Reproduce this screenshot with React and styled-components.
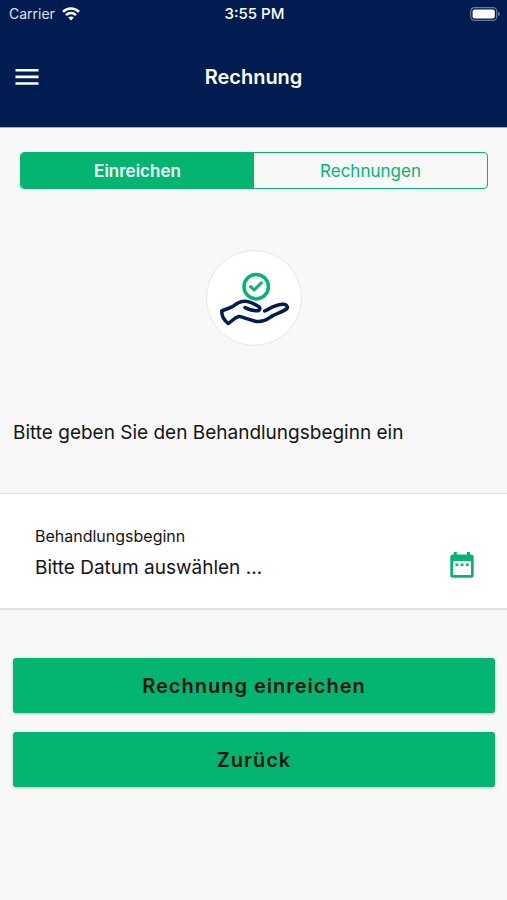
import React, { useState } from "react";
import styled, { createGlobalStyle } from "styled-components";

const green = "#04b572";
const navy = "#001c50";
const line = "#e2e2e3";

const GlobalStyle = createGlobalStyle`
  * { box-sizing: border-box; }
  body {
    margin: 0;
    background: #f8f8f8;
    color: #141414;
    font-family: Inter, "Liberation Sans", sans-serif;
  }
  button, input { font: inherit; color: inherit; }
`;

const Header = styled.header`
  background: ${navy};
  color: #fff;
  border-bottom: 1px solid #a3a9b8;
`;

const StatusBar = styled.div`
  display: grid;
  grid-template-columns: 1fr auto 1fr;
  align-items: center;
  height: 28px;
  padding: 0 7px 0 9px;
  font-size: 14px;
  line-height: 20px;
`;

const Carrier = styled.div`
  display: flex;
  align-items: center;
  gap: 7px;
  color: #dfe3ea;
`;

const Clock = styled.time`
  font-size: 15px;
  font-weight: 500;
`;

const BatteryIcon = styled.svg`
  justify-self: end;
`;

const NavBar = styled.div`
  display: grid;
  grid-template-columns: 40px 1fr 40px;
  align-items: center;
  height: 99px;
  padding: 0 7px 2px;
`;

const IconButton = styled.button`
  display: flex;
  align-items: center;
  justify-content: center;
  width: 40px;
  height: 40px;
  padding: 0;
  border: 0;
  background: none;
  color: ${(p) => p.$color};
  cursor: pointer;
`;

const Title = styled.h1`
  margin: 0;
  font-size: 20px;
  line-height: 24px;
  font-weight: 600;
  text-align: center;
`;

const Tabs = styled.div`
  display: grid;
  grid-template-columns: 1fr 1fr;
  height: 37px;
  margin: 24px 19px 0 20px;
  border: 1px solid ${green};
  border-radius: 4px;
  overflow: hidden;
`;

const Tab = styled.button`
  padding: 0;
  border: 0;
  background: ${(p) => (p.$active ? green : "transparent")};
  color: ${(p) => (p.$active ? "#f2fff9" : green)};
  font-size: 17px;
  line-height: 24px;
  font-weight: ${(p) => (p.$active ? 600 : 400)};
  cursor: pointer;
`;

const Badge = styled.div`
  display: flex;
  align-items: center;
  justify-content: center;
  width: 96px;
  height: 96px;
  margin: 61px auto 0;
  border: 1px solid #e6e6e6;
  border-radius: 50%;
  background: #fff;
`;

const Prompt = styled.p`
  margin: 74px 13px 47px;
  font-size: 19px;
  line-height: 26px;
`;

const DateRow = styled.div`
  display: flex;
  align-items: flex-end;
  height: 117px;
  padding: 0 25px 23px 35px;
  border-top: 1px solid ${line};
  border-bottom: 2px solid ${line};
  background: #fff;
`;

const Field = styled.div`
  flex: 1;
  min-width: 0;
  display: flex;
  flex-direction: column;
  gap: 3px;
`;

const FieldLabel = styled.label`
  font-size: 16px;
  line-height: 20px;
`;

const DateInput = styled.input`
  width: 100%;
  height: 36px;
  padding: 0;
  border: 0;
  outline: 0;
  background: none;
  font-size: 19px;
  line-height: 28px;
  &::placeholder { color: #141414; opacity: 1; }
`;

const Actions = styled.div`
  display: grid;
  gap: 19px;
  padding: 48px 12px 24px 13px;
`;

const ActionButton = styled.button`
  height: 55px;
  padding: 0;
  border: 0;
  border-radius: 3px;
  background: ${green};
  color: #06150e;
  font-size: 20px;
  line-height: 24px;
  font-weight: 600;
  letter-spacing: 1px;
  box-shadow: 0 1px 3px rgba(0, 0, 0, 0.25);
  cursor: pointer;
`;

function WifiIcon() {
  return (
    <svg width="18" height="14" viewBox="0 0 18 14" fill="none" stroke="#fff" strokeWidth="2.5" aria-hidden="true">
      <path d="M1 4.8C5.4 0.4 12.6 0.4 17 4.8" />
      <path d="M4 8.1C6.8 5.4 11.2 5.4 14 8.1" />
      <path d="M9 13.4L6.2 10.6C7.7 9.1 10.3 9.1 11.8 10.6Z" fill="#fff" stroke="none" />
    </svg>
  );
}

function MenuIcon() {
  return (
    <svg width="24" height="18" viewBox="0 0 24 18" fill="#fff" aria-hidden="true">
      <path d="M0.5 1H23.5V3.6H0.5ZM0.5 7.6H23.5V10.2H0.5ZM0.5 14.2H23.5V16.8H0.5Z" />
    </svg>
  );
}

function HandIcon() {
  return (
    <svg width="72" height="54" viewBox="-1 -1 72 54" fill="none" strokeWidth="3.5" strokeLinecap="round" strokeLinejoin="round" aria-hidden="true">
      <g stroke={green}>
        <circle cx="37.2" cy="14.7" r="12.2" />
        <path d="M31.6 14.6L35.2 18L42.4 10.8" strokeWidth="3" />
      </g>
      <g stroke={navy}>
        <path d="M26 35.6C29 37 33.5 38.8 37.5 38.8C41 38.8 42 35.8 39.2 34.2C35.5 32 31 29.5 26 29.3C21.5 29.2 18 31.2 14.5 34C11 36.4 7 37.2 2.8 38.8C2.6 43 5 48.4 9.4 51.6C12.5 49 16 45.5 20 44.4C26 45.5 33 49.6 39.5 49.6C47 49.6 48.5 46.5 54 43.6C58.5 41.2 63.5 40 67.5 37C69.4 35.4 67.8 32.6 64.8 32.3C57.5 31.9 51.5 36.2 45.6 39" />
      </g>
    </svg>
  );
}

function CalendarIcon() {
  return (
    <svg width="24" height="28" viewBox="0 0 24 28" fill="currentColor" aria-hidden="true">
      <path fillRule="evenodd" d="M3.8 1H6.8V3.5H17V1H20V3.5H21.2Q23.7 3.5 23.7 6V24.2Q23.7 26.7 21.2 26.7H2.8Q0.3 26.7 0.3 24.2V6Q0.3 3.5 2.8 3.5H3.8ZM3 10V24H21V10Z" />
      <path d="M5.5 12.4H8.3V15H5.5ZM10.7 12.4H13.5V15H10.7ZM15.9 12.4H18.7V15H15.9Z" />
    </svg>
  );
}

export default function App() {
  const [tab, setTab] = useState("Einreichen");
  return (
    <>
      <GlobalStyle />
      <Header>
        <StatusBar>
          <Carrier>
            Carrier
            <WifiIcon />
          </Carrier>
          <Clock>3:55 PM</Clock>
          <BatteryIcon width="30" height="14" viewBox="0 0 30 14" aria-hidden="true">
            <rect x="0.7" y="0.7" width="26" height="12.6" rx="3.6" fill="none" stroke="#6b7a9b" strokeWidth="1.2" />
            <rect x="2.6" y="2.5" width="22.2" height="9" rx="2" fill="#fff" />
            <path d="M28 4.8Q30 5.6 30 7Q30 8.4 28 9.2Z" fill="#6b7a9b" />
          </BatteryIcon>
        </StatusBar>
        <NavBar>
          <IconButton type="button" $color="#fff" aria-label="Menü">
            <MenuIcon />
          </IconButton>
          <Title>Rechnung</Title>
        </NavBar>
      </Header>
      <main>
        <Tabs role="tablist">
          {["Einreichen", "Rechnungen"].map((name) => (
            <Tab key={name} type="button" role="tab" aria-selected={tab === name} $active={tab === name} onClick={() => setTab(name)}>
              {name}
            </Tab>
          ))}
        </Tabs>
        <Badge>
          <HandIcon />
        </Badge>
        <Prompt>Bitte geben Sie den Behandlungsbeginn ein</Prompt>
        <DateRow>
          <Field>
            <FieldLabel htmlFor="start">Behandlungsbeginn</FieldLabel>
            <DateInput id="start" type="text" placeholder="Bitte Datum auswählen ..." />
          </Field>
          <IconButton type="button" $color={green} aria-label="Kalender öffnen">
            <CalendarIcon />
          </IconButton>
        </DateRow>
        <Actions>
          <ActionButton type="button">Rechnung einreichen</ActionButton>
          <ActionButton type="button">Zurück</ActionButton>
        </Actions>
      </main>
    </>
  );
}
